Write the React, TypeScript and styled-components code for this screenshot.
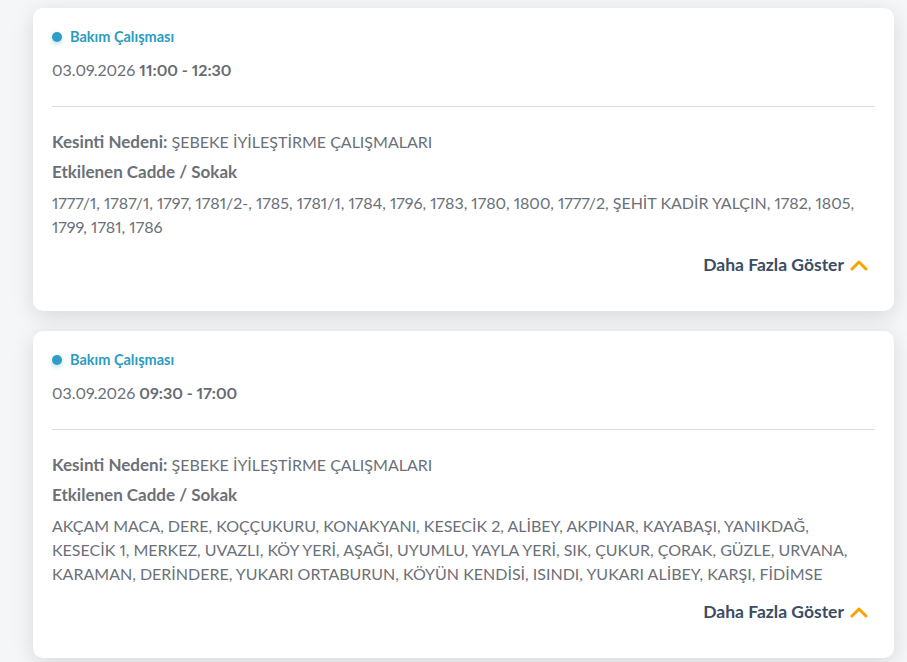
import { createGlobalStyle, styled } from 'styled-components'

interface Outage {
  id: number
  type: string
  date: string
  time: string
  reason: string
  streets: string
}

const OUTAGES: Outage[] = [
  {
    id: 1,
    type: 'Bakım Çalışması',
    date: '03.09.2026',
    time: '11:00 - 12:30',
    reason: 'ŞEBEKE İYİLEŞTİRME ÇALIŞMALARI',
    streets:
      '1777/1, 1787/1, 1797, 1781/2-, 1785, 1781/1, 1784, 1796, 1783, 1780, 1800, 1777/2, ŞEHİT KADİR YALÇIN, 1782, 1805, 1799, 1781, 1786',
  },
  {
    id: 2,
    type: 'Bakım Çalışması',
    date: '03.09.2026',
    time: '09:30 - 17:00',
    reason: 'ŞEBEKE İYİLEŞTİRME ÇALIŞMALARI',
    streets:
      'AKÇAM MACA, DERE, KOÇÇUKURU, KONAKYANI, KESECİK 2, ALİBEY, AKPINAR, KAYABAŞI, YANIKDAĞ, KESECİK 1, MERKEZ, UVAZLI, KÖY YERİ, AŞAĞI, UYUMLU, YAYLA YERİ, SIK, ÇUKUR, ÇORAK, GÜZLE, URVANA, KARAMAN, DERİNDERE, YUKARI ORTABURUN, KÖYÜN KENDİSİ, ISINDI, YUKARI ALİBEY, KARŞI, FİDİMSE',
  },
]

const GlobalStyle = createGlobalStyle`
  html, body {
    margin: 0;
    background: #f5f6f8;
    font-family: Lato, 'Noto Sans', sans-serif;
    font-variant-numeric: proportional-nums;
  }
`

const List = styled.main`
  display: flex;
  flex-direction: column;
  gap: 20px;
  padding: 8px 13px 8px 33px;
`

const Card = styled.article`
  background: #ffffff;
  border-radius: 10px;
  box-shadow: 0 5px 22px rgba(0, 0, 0, 0.12);
  padding: 19px 19px 36px 19px;
  display: flex;
  flex-direction: column;
`

const TypeRow = styled.div`
  display: flex;
  align-items: center;
  gap: 8px;
  color: #2b9cc0;
  font-size: 14.5px;
  font-weight: 700;
  line-height: 20px;
`

const Dot = styled.span`
  width: 10px;
  height: 10px;
  border-radius: 50%;
  background: #2e9ec4;
  box-shadow: 0 2px 5px rgba(46, 158, 196, 0.35);
`

const DateLine = styled.div`
  margin-top: 12px;
  color: #6b7079;
  font-size: 16px;
  line-height: 22px;

  strong {
    font-weight: 700;
    color: #666b73;
  }
`

const Divider = styled.hr`
  border: none;
  border-top: 1px solid #dadcdf;
  margin: 25px 0 24px;
`

const Line = styled.div`
  color: #6b7079;
  font-size: 16px;
  line-height: 22px;

  strong {
    font-size: 17px;
    font-weight: 700;
    line-height: 1;
  }
`

const Label = styled.div`
  margin-top: 8px;
  color: #6b7079;
  font-size: 17px;
  font-weight: 700;
  line-height: 22px;
`

const Streets = styled.p`
  margin: 8px 0 0;
  color: #6b7079;
  font-size: 16px;
  line-height: 24px;
`

const Footer = styled.div`
  display: flex;
  justify-content: flex-end;
  margin-top: 15px;
`

const MoreButton = styled.button`
  display: inline-flex;
  align-items: center;
  gap: 6px;
  border: none;
  background: none;
  padding: 0 7px 0 0;
  font-family: inherit;
  font-size: 17.5px;
  font-weight: 700;
  color: #3b4d63;
  cursor: pointer;
`

const Chevron = () => (
  <svg width="18" height="12" viewBox="0 0 18 12" fill="none">
    <path d="M2 10 L9 3 L16 10" stroke="#f7a300" strokeWidth="3" strokeLinecap="round" strokeLinejoin="round" />
  </svg>
)

export default function App() {
  return (
    <>
      <GlobalStyle />
      <List>
        {OUTAGES.map((o) => (
          <Card key={o.id}>
            <TypeRow>
              <Dot />
              {o.type}
            </TypeRow>
            <DateLine>
              {o.date} <strong>{o.time}</strong>
            </DateLine>
            <Divider />
            <Line>
              <strong>Kesinti Nedeni:</strong> {o.reason}
            </Line>
            <Label>Etkilenen Cadde / Sokak</Label>
            <Streets>{o.streets}</Streets>
            <Footer>
              <MoreButton>
                Daha Fazla Göster
                <Chevron />
              </MoreButton>
            </Footer>
          </Card>
        ))}
      </List>
    </>
  )
}
